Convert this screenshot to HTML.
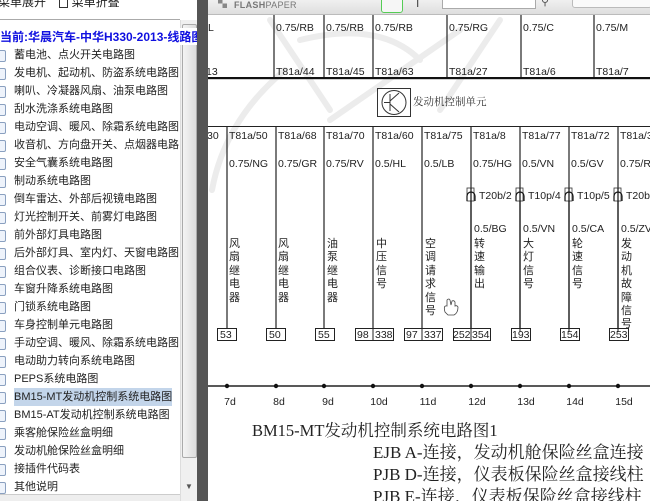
<!DOCTYPE html>
<html><head><meta charset="utf-8"><style>
html,body{margin:0;padding:0;width:650px;height:501px;overflow:hidden;background:#fff;position:relative;font-family:"Liberation Sans","Noto Sans CJK SC",sans-serif}
.lp{position:absolute;left:0;top:0;width:181px;height:501px;background:#fff;overflow:hidden}
.it{position:absolute;left:0;height:18px;line-height:18px;font-size:11px;color:#222;white-space:nowrap}
.it i{position:absolute;left:-3px;top:4px;width:7px;height:10px;border:1px solid #8aa0c0;border-radius:2px;background:#eef3fb}
.it span{position:absolute;left:14px}
.sel span{background:#c3d5ea}
</style></head><body>
<div class="lp">
 <div style="position:absolute;left:-2px;top:-7px;font-size:12px;color:#222;white-space:nowrap">菜单展开 &nbsp;&nbsp;&nbsp;<span style="display:inline-block;width:7px;height:8px;border:1px solid #333;vertical-align:middle"></span> 菜单折叠</div>
 <div style="position:absolute;left:0;top:19px;width:180px;height:1px;background:#aaa"></div>
 <div class="it" style="top:46px"><i></i><span>蓄电池、点火开关电路图</span></div>
 <div class="it" style="top:64px"><i></i><span>发电机、起动机、防盗系统电路图</span></div>
 <div class="it" style="top:82px"><i></i><span>喇叭、冷凝器风扇、油泵电路图</span></div>
 <div class="it" style="top:100px"><i></i><span>刮水洗涤系统电路图</span></div>
 <div class="it" style="top:118px"><i></i><span>电动空调、暖风、除霜系统电路图</span></div>
 <div class="it" style="top:136px"><i></i><span>收音机、方向盘开关、点烟器电路</span></div>
 <div class="it" style="top:154px"><i></i><span>安全气囊系统电路图</span></div>
 <div class="it" style="top:172px"><i></i><span>制动系统电路图</span></div>
 <div class="it" style="top:190px"><i></i><span>倒车雷达、外部后视镜电路图</span></div>
 <div class="it" style="top:208px"><i></i><span>灯光控制开关、前雾灯电路图</span></div>
 <div class="it" style="top:226px"><i></i><span>前外部灯具电路图</span></div>
 <div class="it" style="top:244px"><i></i><span>后外部灯具、室内灯、天窗电路图</span></div>
 <div class="it" style="top:262px"><i></i><span>组合仪表、诊断接口电路图</span></div>
 <div class="it" style="top:280px"><i></i><span>车窗升降系统电路图</span></div>
 <div class="it" style="top:298px"><i></i><span>门锁系统电路图</span></div>
 <div class="it" style="top:316px"><i></i><span>车身控制单元电路图</span></div>
 <div class="it" style="top:334px"><i></i><span>手动空调、暖风、除霜系统电路图</span></div>
 <div class="it" style="top:352px"><i></i><span>电动助力转向系统电路图</span></div>
 <div class="it" style="top:370px"><i></i><span>PEPS系统电路图</span></div>
 <div class="it sel" style="top:388px"><i></i><span>BM15-MT发动机控制系统电路图</span></div>
 <div class="it" style="top:406px"><i></i><span>BM15-AT发动机控制系统电路图</span></div>
 <div class="it" style="top:424px"><i></i><span>乘客舱保险丝盒明细</span></div>
 <div class="it" style="top:442px"><i></i><span>发动机舱保险丝盒明细</span></div>
 <div class="it" style="top:460px"><i></i><span>接插件代码表</span></div>
 <div class="it" style="top:478px"><i></i><span>其他说明</span></div>
 <div style="position:absolute;left:0;top:494px;width:182px;height:7px;background:#eee;border-top:1px solid #ccc"></div>
</div>
<!-- vertical scrollbar -->
<div style="position:absolute;left:180px;top:20px;width:17px;height:481px;background:#f0f0f0;border-left:1px solid #ddd"></div>
<div style="position:absolute;left:182px;top:24px;width:13px;height:432px;background:linear-gradient(90deg,#f4f4f4,#dcdcdc);border:1px solid #aaa;border-radius:2px"></div>
<div style="position:absolute;left:185px;top:482px;font-size:8px;color:#555">▼</div>
<div style="position:absolute;left:0;top:28px;width:197px;overflow:hidden;font-size:12px;font-weight:bold;color:#1010e0;white-space:nowrap;background:#fff;height:17px">当前:华晨汽车-中华H330-2013-线路图</div>
<!-- dark bar -->
<div style="position:absolute;left:197px;top:0;width:11px;height:501px;background:#555"></div>
<!-- toolbar -->
<div style="position:absolute;left:208px;top:0;width:442px;height:14px;background:linear-gradient(#f0f0f0,#dedede);border-bottom:1px solid #bbb"></div>
<div style="position:absolute;left:218px;top:-3px;font-size:9px;font-weight:bold;color:#888">▚</div>
<div style="position:absolute;left:234px;top:0;font-size:9px;font-weight:bold;color:#777;letter-spacing:.3px">FLASH<span style="font-weight:normal">PAPER</span></div>
<div style="position:absolute;left:381px;top:-3px;width:20px;height:14px;border:1px solid #5c5;border-radius:3px;background:#f6f6f6"></div>
<div style="position:absolute;left:416px;top:-4px;font-size:12px;color:#444">I</div>
<div style="position:absolute;left:442px;top:-2px;width:92px;height:9px;background:#fff;border:1px solid #aaa"></div>
<div style="position:absolute;left:541px;top:-5px;font-size:11px;color:#555">⚲</div>
<div style="position:absolute;left:572px;top:-2px;width:78px;height:8px;background:#fafafa;border:1px solid #bbb;border-radius:3px"></div>

<svg width="650" height="501" style="position:absolute;left:0;top:0" xmlns="http://www.w3.org/2000/svg" font-family="Liberation Sans, sans-serif" font-size="10.5" fill="#222">
<defs><clipPath id="c"><rect x="208" y="15" width="442" height="486"/></clipPath></defs>
<g clip-path="url(#c)">
<g stroke="#ececec" stroke-width="6" fill="none" stroke-linecap="round">
<path d="M212 190 Q225 120 285 70"/><path d="M270 20 L330 110"/><path d="M300 40 Q380 20 420 60"/><path d="M330 120 L460 30"/><path d="M440 110 L500 20"/>
</g>
<g stroke="#222" stroke-width="1.2">
<line x1="274" y1="14" x2="274" y2="78"/><line x1="324" y1="14" x2="324" y2="78"/><line x1="373" y1="14" x2="373" y2="78"/><line x1="447" y1="14" x2="447" y2="78"/><line x1="521" y1="14" x2="521" y2="78"/><line x1="594" y1="14" x2="594" y2="78"/>
</g>
<rect x="208" y="77" width="442" height="2.2" fill="#111"/>
<text x="208" y="31">L</text><text x="276" y="31">0.75/RB</text><text x="326" y="31">0.75/RB</text><text x="375" y="31">0.75/RB</text><text x="449" y="31">0.75/RG</text><text x="523" y="31">0.75/C</text><text x="596" y="31">0.75/M</text>
<text x="206" y="75">13</text><text x="276" y="75">T81a/44</text><text x="326" y="75">T81a/45</text><text x="375" y="75">T81a/63</text><text x="449" y="75">T81a/27</text><text x="523" y="75">T81a/6</text><text x="596" y="75">T81a/7</text>
<rect x="377.5" y="88.5" width="33" height="28" fill="none" stroke="#333"/>
<circle cx="394" cy="102.5" r="12" fill="none" stroke="#333"/>
<path d="M390 94 V111 M384 102.5 H390 M390 101 L399 93 M390 104 L399 112" stroke="#333" fill="none"/>
<text x="413" y="105" font-size="10.5" font-family="Noto Serif CJK SC, serif" fill="#333">发动机控制单元</text>
<line x1="208" y1="126.5" x2="650" y2="126.5" stroke="#222"/>
<g stroke="#222" stroke-width="1.2">
<line x1="227" y1="127" x2="227" y2="340"/><line x1="276" y1="127" x2="276" y2="340"/><line x1="324" y1="127" x2="324" y2="340"/><line x1="373" y1="127" x2="373" y2="340"/><line x1="422" y1="127" x2="422" y2="340"/><line x1="471" y1="127" x2="471" y2="340"/><line x1="520" y1="127" x2="520" y2="340"/><line x1="569" y1="127" x2="569" y2="340"/><line x1="618" y1="127" x2="618" y2="340"/>
</g>
<text x="207" y="139">30</text>
<text x="229" y="139">T81a/50</text><text x="278" y="139">T81a/68</text><text x="326" y="139">T81a/70</text><text x="375" y="139">T81a/60</text><text x="424" y="139">T81a/75</text><text x="473" y="139">T81a/8</text><text x="522" y="139">T81a/77</text><text x="571" y="139">T81a/72</text><text x="620" y="139">T81a/3</text>
<text x="229" y="167">0.75/NG</text><text x="278" y="167">0.75/GR</text><text x="326" y="167">0.75/RV</text><text x="375" y="167">0.5/HL</text><text x="424" y="167">0.5/LB</text><text x="473" y="167">0.75/HG</text><text x="522" y="167">0.5/VN</text><text x="571" y="167">0.5/GV</text><text x="620" y="167">0.75/R</text>
<g fill="#fff" stroke="#333" stroke-width="0.8">
<rect x="467" y="188" width="7" height="13"/><rect x="516" y="188" width="7" height="13"/><rect x="565" y="188" width="7" height="13"/><rect x="614" y="188" width="7" height="13"/>
</g>
<g fill="none" stroke="#111" stroke-width="1.2">
<path d="M467 201 V196 A4 4 0 0 1 475 196 V201"/><path d="M516 201 V196 A4 4 0 0 1 524 196 V201"/><path d="M565 201 V196 A4 4 0 0 1 573 196 V201"/><path d="M614 201 V196 A4 4 0 0 1 622 196 V201"/>
<line x1="471" y1="188" x2="471" y2="340"/><line x1="520" y1="188" x2="520" y2="340"/><line x1="569" y1="188" x2="569" y2="340"/><line x1="618" y1="188" x2="618" y2="340"/>
</g>
<text x="479" y="199">T20b/2</text><text x="528" y="199">T10p/4</text><text x="577" y="199">T10p/5</text><text x="626" y="199">T20b</text>
<text x="474" y="232">0.5/BG</text><text x="523" y="232">0.5/VN</text><text x="572" y="232">0.5/CA</text><text x="621" y="232">0.5/ZV</text>
<g font-size="11" font-family="Noto Sans CJK SC, sans-serif">
<text x="229" y="247">风</text><text x="229" y="260">扇</text><text x="229" y="274">继</text><text x="229" y="287">电</text><text x="229" y="301">器</text>
<text x="278" y="247">风</text><text x="278" y="260">扇</text><text x="278" y="274">继</text><text x="278" y="287">电</text><text x="278" y="301">器</text>
<text x="327" y="247">油</text><text x="327" y="260">泵</text><text x="327" y="274">继</text><text x="327" y="287">电</text><text x="327" y="301">器</text>
<text x="376" y="247">中</text><text x="376" y="260">压</text><text x="376" y="274">信</text><text x="376" y="287">号</text>
<text x="425" y="247">空</text><text x="425" y="260">调</text><text x="425" y="274">请</text><text x="425" y="287">求</text><text x="425" y="301">信</text><text x="425" y="314">号</text>
<text x="474" y="247">转</text><text x="474" y="260">速</text><text x="474" y="274">输</text><text x="474" y="287">出</text>
<text x="523" y="247">大</text><text x="523" y="260">灯</text><text x="523" y="274">信</text><text x="523" y="287">号</text>
<text x="572" y="247">轮</text><text x="572" y="260">速</text><text x="572" y="274">信</text><text x="572" y="287">号</text>
<text x="621" y="247">发</text><text x="621" y="260">动</text><text x="621" y="274">机</text><text x="621" y="287">故</text><text x="621" y="301">障</text><text x="621" y="314">信</text><text x="621" y="327">号</text>
</g>
<path d="M445 312 Q443 305 447 306 L447 300 Q449 298 450 300 L451 305 L452 301 Q454 300 455 302 L455 306 Q457 305 458 307 Q458 313 454 315 L448 315 Z" fill="#fff" stroke="#444" stroke-width="0.8"/>
<g fill="#fff" stroke="#222" stroke-width="1">
<rect x="217.5" y="328.5" width="19" height="12"/><rect x="266.5" y="328.5" width="19" height="12"/><rect x="315.5" y="328.5" width="19" height="12"/>
<rect x="355.5" y="328.5" width="38" height="12"/><rect x="404.5" y="328.5" width="38" height="12"/><rect x="453.5" y="328.5" width="37" height="12"/>
<rect x="511.5" y="328.5" width="19" height="12"/><rect x="560.5" y="328.5" width="19" height="12"/><rect x="609.5" y="328.5" width="19" height="12"/>
</g>
<g stroke="#222" stroke-width="1"><line x1="373" y1="328" x2="373" y2="341"/><line x1="422" y1="328" x2="422" y2="341"/><line x1="471" y1="328" x2="471" y2="341"/><line x1="520" y1="328" x2="520" y2="332"/><line x1="569" y1="328" x2="569" y2="332"/><line x1="618" y1="328" x2="618" y2="332"/></g>
<text x="220" y="338">53</text><text x="269" y="338">50</text><text x="318" y="338">55</text><text x="357" y="338">98</text><text x="375" y="338">338</text><text x="406" y="338">97</text><text x="424" y="338">337</text><text x="453" y="338">252</text><text x="472" y="338">354</text><text x="512" y="338">193</text><text x="561" y="338">154</text><text x="610" y="338">253</text>
<line x1="208" y1="386" x2="650" y2="386" stroke="#222" stroke-width="1.5"/>
<g fill="#111"><circle cx="227" cy="386" r="2.2"/><circle cx="276" cy="386" r="2.2"/><circle cx="324" cy="386" r="2.2"/><circle cx="373" cy="386" r="2.2"/><circle cx="422" cy="386" r="2.2"/><circle cx="471" cy="386" r="2.2"/><circle cx="520" cy="386" r="2.2"/><circle cx="569" cy="386" r="2.2"/><circle cx="618" cy="386" r="2.2"/></g>
<g text-anchor="middle"><text x="230" y="405">7d</text><text x="279" y="405">8d</text><text x="328" y="405">9d</text><text x="379" y="405">10d</text><text x="428" y="405">11d</text><text x="477" y="405">12d</text><text x="526" y="405">13d</text><text x="575" y="405">14d</text><text x="624" y="405">15d</text></g>
<g font-family="Liberation Serif, Noto Serif CJK SC, serif" fill="#222">
<text x="252" y="436" font-size="16.5">BM15-MT发动机控制系统电路图1</text>
<text x="373" y="458" font-size="17">EJB A-连接，发动机舱保险丝盒连接</text>
<text x="373" y="480" font-size="17">PJB D-连接，仪表板保险丝盒接线柱</text>
<text x="373" y="502" font-size="17">PJB E-连接，仪表板保险丝盒接线柱</text>
</g>
</g>
</svg>
</body></html>
